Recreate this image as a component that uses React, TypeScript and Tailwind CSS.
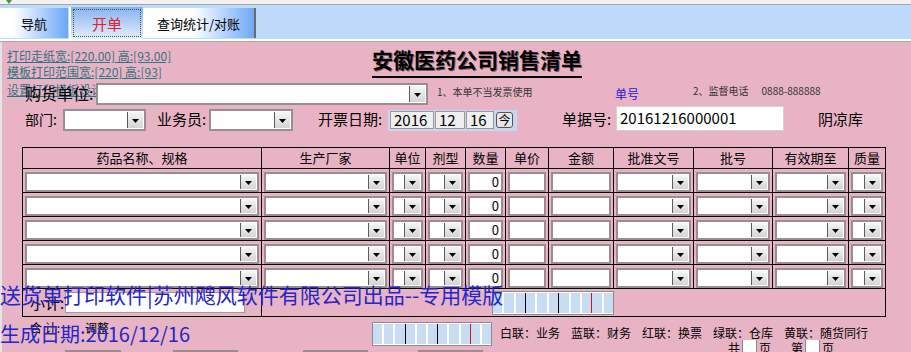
import React from 'react';

const Arrow = () => (
  <div className="my-[1px] mr-[1px] flex w-[16px] shrink-0 items-center justify-center border-l border-[#5a5a5a] bg-gradient-to-b from-[#f6f6f6] to-[#d4d4d4]">
    <svg width="7" height="4" viewBox="0 0 7 4" className="mt-[2px]">
      <path d="M0 0h7L3.5 4z" fill="#000" />
    </svg>
  </div>
);

const Combo = ({ className = '' }: { className?: string }) => (
  <div className={`flex border-2 border-[#988d91] bg-white ${className}`}>
    <div className="flex-1" />
    <Arrow />
  </div>
);

const Box = ({ value = '' }: { value?: string }) => (
  <div className="h-[20px] w-full border-2 border-[#988d91] bg-white pr-[2px] text-right text-[13px] leading-[16px]">
    {value}
  </div>
);

const DigitBox = ({ className = '' }: { className?: string }) => {
  const cells = [0, 1, 2, 3, 4, 5, 6, 7, 8, 9, 10];
  return (
    <div className={`flex border border-[#8c8c8c] bg-white py-[1px] ${className}`}>
      {cells.map((i) => (
        <div
          key={i}
          className={
            i === 2 || i === 5
              ? 'flex-1 border-r border-black bg-[#c8dcf3]'
              : i === 8
              ? 'flex-1 border-r border-[#d01818] bg-[#c8dcf3]'
              : i === 10
              ? 'flex-1 bg-[#c8dcf3]'
              : 'flex-1 border-r-2 border-white bg-[#c8dcf3]'
          }
        />
      ))}
    </div>
  );
};

const headers = ['药品名称、规格', '生产厂家', '单位', '剂型', '数量', '单价', '金额', '批准文号', '批号', '有效期至', '质量'];

const Row = () => (
  <>
    <div className="h-[24px] border-r border-b border-black px-[2px] pt-[3px]"><Combo className="h-[20px]" /></div>
    <div className="h-[24px] border-r border-b border-black px-[2px] pt-[3px]"><Combo className="h-[20px]" /></div>
    <div className="h-[24px] border-r border-b border-black px-[2px] pt-[3px]"><Combo className="h-[20px]" /></div>
    <div className="h-[24px] border-r border-b border-black px-[2px] pt-[3px]"><Combo className="h-[20px]" /></div>
    <div className="h-[24px] border-r border-b border-black px-[2px] pt-[3px]"><Box value="0" /></div>
    <div className="h-[24px] border-r border-b border-black px-[2px] pt-[3px]"><Box /></div>
    <div className="h-[24px] border-r border-b border-black px-[2px] pt-[3px]"><Box /></div>
    <div className="h-[24px] border-r border-b border-black px-[2px] pt-[3px]"><Combo className="h-[20px]" /></div>
    <div className="h-[24px] border-r border-b border-black px-[2px] pt-[3px]"><Combo className="h-[20px]" /></div>
    <div className="h-[24px] border-r border-b border-black px-[2px] pt-[3px]"><Combo className="h-[20px]" /></div>
    <div className="h-[24px] border-r border-b border-black px-[2px] pt-[3px]"><Combo className="h-[20px]" /></div>
  </>
);

export default function App() {
  return (
    <div className="relative h-[352px] w-[911px] overflow-hidden bg-[#e8b4c5] font-['Noto_Sans_CJK_SC','Noto_Sans',sans-serif] text-black">
      {/* top strip */}
      <div className="relative h-[5px] border-b border-[#a5a5a5] bg-[#f2f2f2]">
        <svg className="absolute left-[6px] top-0" width="6" height="4" viewBox="0 0 6 4">
          <path d="M0 0h6L3 4z" fill="#3c9c3c" />
        </svg>
      </div>

      {/* tabs */}
      <div className="flex h-[34px] bg-[#bfdbfc] pt-[3px]">
        <div className="flex h-[30px] w-[68px] items-center justify-center bg-gradient-to-r from-white from-20% to-[#6aa5f6] text-[13px] leading-none">
          导航
        </div>
        <div className="-mt-[1px] ml-[1px] flex h-[32px] w-[74px] border-l-2 border-white bg-gradient-to-b from-[#87b2ef] to-[#e6effb] p-[2px]">
          <div className="flex flex-1 items-center justify-center border border-dotted border-[#2d5a4a] text-[15px] leading-none text-[#e3202c]">
            开单
          </div>
        </div>
        <div className="flex h-[30px] w-[113px] items-center justify-center border-r-2 border-[#6b6b6b] bg-gradient-to-r from-white from-45% to-[#6ea8f7] text-[13px] leading-none">
          查询统计/对账
        </div>
      </div>
      <div className="h-[2px] bg-white" />
      <div className="h-[1px] bg-[#a8a8a8]" />

      {/* pink panel */}
      <div className="border-l-2 border-[#e4e4e4]">
        {/* title row */}
        <div className="flex h-[41px]">
          <div className="w-[370px] pl-[5px] pt-[6px] text-[12px] leading-[16px] text-[#2f7384]">
            <div className="underline">打印走纸宽:[220.00] 高:[93.00]</div>
            <div className="underline">模板打印范围宽:[220] 高:[93]</div>
          </div>
          <div className="pt-[4px]">
            <div className="border-b-2 border-black pb-[4px] text-[21px] font-bold leading-[26px] [text-shadow:1px_1px_0_#7a5a66]">
              安徽医药公司销售清单
            </div>
          </div>
        </div>

        {/* 购货单位 row */}
        <div className="relative flex h-[23px] items-start">
          <span className="absolute left-[5px] top-[0px] text-[12px] leading-[14px] text-[#2f7384] underline">设置打印模板设计位置</span>
          <span className="relative ml-[23px] w-[71px] text-[16px] leading-[20px]">购货单位:</span>
          <Combo className="relative h-[22px] w-[332px]" />
          <span className="ml-[9px] mt-[3px] w-[178px] text-[10px] leading-[12px] text-[#333]">1、本单不当发票使用</span>
          <span className="mt-[4px] w-[78px] text-[12px] leading-[14px] text-[#1c1ccc]">单号</span>
          <span className="mt-[2px] text-[10px] leading-[12px] text-[#333]">
            2、监督电话<span className="ml-[13px]">0888-888888</span>
          </span>
        </div>

        {/* 部门 row */}
        <div className="flex h-[25px] items-center">
          <span className="ml-[23px] w-[38px] text-[14px] leading-none">部门:</span>
          <Combo className="mt-[3px] h-[22px] w-[83px]" />
          <span className="ml-[11px] w-[52px] text-[15px] leading-none">业务员:</span>
          <Combo className="mt-[3px] h-[22px] w-[84px]" />
          <span className="ml-[25px] w-[70px] text-[15px] leading-none">开票日期:</span>
          <div className="mt-[3px] flex h-[21px] w-[129px] items-center gap-[1px] bg-[#c6d8f0] px-[2px]">
            <div className="h-[18px] w-[44px] border border-[#9a9a9a] bg-[#efefef] pl-[3px] text-[15px] leading-[16px]">2016</div>
            <div className="h-[18px] w-[30px] border border-[#9a9a9a] bg-[#efefef] pl-[3px] text-[15px] leading-[16px]">12</div>
            <div className="h-[18px] w-[28px] border border-[#9a9a9a] bg-[#efefef] pl-[3px] text-[15px] leading-[16px]">16</div>
            <div className="ml-[1px] flex h-[16px] w-[17px] items-center justify-center rounded-[3px] border border-[#555] bg-[#e6e6e6] text-[12px] leading-none">今</div>
          </div>
          <span className="ml-[45px] w-[54px] text-[15px] leading-none">单据号:</span>
          <div className="h-[25px] w-[168px] border border-[#d4d4d4] bg-white pl-[3px] text-[15px] leading-[22px]">20161216000001</div>
          <span className="ml-[34px] text-[15px] leading-none">阴凉库</span>
        </div>

        {/* table */}
        <div className="ml-[20px] mt-[16px] grid w-[864px] grid-cols-[239px_128px_36px_40px_40px_43px_65px_80px_79px_76px_37px] border-l border-t border-black">
          {headers.map((h) => (
            <div key={h} className="h-[21px] border-r border-b border-black text-center text-[13px] leading-[20px]">
              {h}
            </div>
          ))}
          <Row />
          <Row />
          <Row />
          <Row />
          <Row />
          <div className="flex h-[28px] items-center border-r border-b border-black">
            <span className="w-[42px] pl-[7px] text-[15px] leading-none">小计:</span>
            <div className="h-[21px] w-[180px] border border-[#a09a9c] bg-white" />
          </div>
          <div className="col-span-10 h-[28px] border-r border-b border-black pl-[230px] pt-[2px]">
            <DigitBox className="h-[24px] w-[122px]" />
          </div>
        </div>

        {/* bottom */}
        <div className="flex h-[33px] pt-[5px]">
          <DigitBox className="ml-[370px] h-[24px] w-[120px]" />
          <div className="ml-[8px] text-[12px]">
            <div className="mt-[4px] flex gap-[11px] leading-[14px]">
              <span>白联：业务</span>
              <span>蓝联：财务</span>
              <span>红联：换票</span>
              <span>绿联：仓库</span>
              <span>黄联：随货同行</span>
            </div>
            <div className="ml-[228px] flex items-start leading-[14px]">
              <span className="mt-[1px]">共</span>
              <div className="ml-[2px] h-[20px] w-[15px] border-x border-[#888] bg-white" />
              <span className="ml-[2px] mt-[1px]">页</span>
              <span className="ml-[20px] mt-[1px]">第</span>
              <div className="ml-[2px] h-[20px] w-[15px] border-x border-[#888] bg-white" />
              <span className="ml-[2px] mt-[1px]">页</span>
            </div>
          </div>
        </div>
        <div className="flex">
          <div className="ml-[63px] h-[20px] w-[56px] border-2 border-[#988d91] bg-white" />
          <div className="ml-[52px] h-[20px] w-[65px] border-2 border-[#988d91] bg-white" />
          <div className="ml-[65px] h-[20px] w-[65px] border-2 border-[#988d91] bg-white" />
          <div className="ml-[50px] h-[20px] w-[65px] border-2 border-[#988d91] bg-white" />
        </div>
      </div>

      {/* overlapping texts */}
      <span className="absolute left-[30px] top-[321px] text-[12px] leading-[14px]">合 计:</span>
      <span className="absolute left-[85px] top-[321px] text-[12px] leading-[14px]">调整</span>
      <span className="absolute left-0 top-[282px] whitespace-nowrap text-[21px] leading-[24px] text-[#2626c8]">
        送货单打印软件|苏州飕风软件有限公司出品--专用模版
      </span>
      <span className="absolute left-0 top-[322px] whitespace-nowrap text-[20px] leading-[24px] text-[#2626c8]">
        生成日期:2016/12/16
      </span>
    </div>
  );
}
